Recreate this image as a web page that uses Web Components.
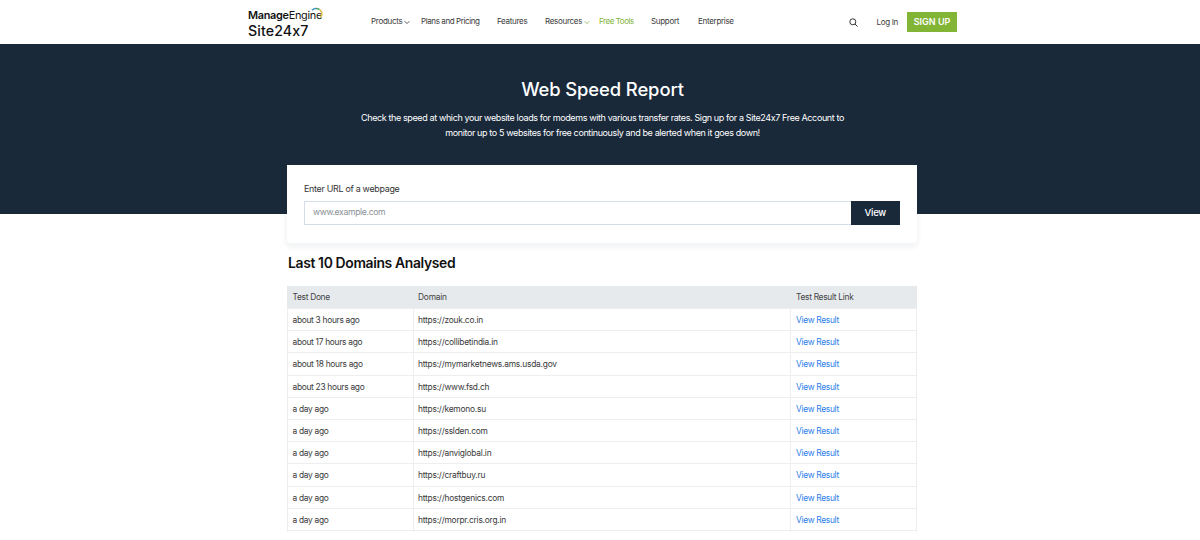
<!DOCTYPE html>
<html>
<head>
<meta charset="utf-8">
<title>Web Speed Report</title>
<style>
    html { margin: 0; padding: 0; background: #fff; overflow: hidden; }
    body { margin: 0; font-family: Inter, "Liberation Sans", sans-serif; color: #222; height: 540px; }
</style>
</head>
<body>
<site-header></site-header>
<speed-hero></speed-hero>
<url-card></url-card>
<domain-table></domain-table>

<script>
class SiteHeader extends HTMLElement {
    constructor() {
        super();
        this.attachShadow({ mode: 'open' });
        const chev = c => `<svg class="chev" width="6" height="5" viewBox="0 0 7 5"><path d="M.7 1l2.8 2.8L6.3 1" fill="none" stroke="${c}" stroke-width="1"/></svg>`;
        this.shadowRoot.innerHTML = `
        <style>
            :host { display: block; height: 44px; background: #fff; }
            .wrap { display: flex; align-items: center; height: 44px; padding-left: 248px; box-sizing: border-box; width: 957px; }
            .logo { display: flex; flex-direction: column; width: 123px; position: relative; flex: none; color: #111; padding-top: 3px; }
            .me { font: 600 10.9px/13px Inter, sans-serif; letter-spacing: -.3px; white-space: nowrap; }
            .me span { font-weight: 400; }
            .s247 { font: 500 14.2px/17px Inter, sans-serif; font-feature-settings: "calt" 0; letter-spacing: .1px; }
            .arc { position: absolute; left: 62px; top: 1px; }
            nav { display: flex; align-items: center; font: 400 8px/12px Inter, sans-serif; letter-spacing: -.3px; color: #3a3a3a; padding-bottom: 2px; }
            nav a { white-space: nowrap; }
            .chev { margin-left: 2px; vertical-align: -1px; }
            .green { color: #7fb236; }
            .right { margin-left: auto; display: flex; align-items: center; font: 400 8px/12px Inter, sans-serif; letter-spacing: -.3px; color: #3a3a3a; }
            .signup { background: #82b536; color: #fff; font: 600 9px/20px Inter, sans-serif; letter-spacing: 0; width: 50px; height: 20px; text-align: center; margin-left: 9px; }
            .search { margin-right: 18px; display: block; }
        </style>
        <div class="wrap">
            <div class="logo">
                <div class="me">Manage<span>Engine</span></div>
                <div class="s247">Site24x7</div>
                <svg class="arc" width="14" height="12" viewBox="0 0 14 12" fill="none" stroke-width="1.5">
                    <path d="M2 3.2A6 6 0 0 1 6 1.6" stroke="#3f8fc4"/>
                    <path d="M6 1.6a6 6 0 0 1 3.6 1.1" stroke="#4aa86a"/>
                    <path d="M9.6 2.7a6 6 0 0 1 2.4 3.4" stroke="#e3b53c"/>
                    <path d="M12 6.1a6 6 0 0 1-1.6 4.2" stroke="#d9c34e"/>
                </svg>
            </div>
            <nav>
                <a style="width:50px">Products${chev('#444')}</a>
                <a style="width:76px;letter-spacing:-.4px">Plans and Pricing</a>
                <a style="width:48px">Features</a>
                <a style="width:54px">Resources${chev('#8ab84a')}</a>
                <a class="green" style="width:52px;letter-spacing:-.45px">Free Tools</a>
                <a style="width:47px">Support</a>
                <a>Enterprise</a>
            </nav>
            <div class="right">
                <svg class="search" width="9" height="9" viewBox="0 0 9 9" fill="none" stroke="#333" stroke-width="1"><circle cx="3.8" cy="3.8" r="3"/><path d="M6 6l2.5 2.5"/></svg>
                <a>Log In</a>
                <a class="signup">SIGN UP</a>
            </div>
        </div>`;
    }
}

class SpeedHero extends HTMLElement {
    constructor() {
        super();
        this.attachShadow({ mode: 'open' });
        this.shadowRoot.innerHTML = `
        <style>
            :host { display: block; height: 170px; background: #19293a; color: #fff; text-align: center; box-sizing: border-box; padding: 33px 0 0 5px; }
            h1 { margin: 0; font: 500 18.4px/24px Inter, sans-serif; letter-spacing: -.1px; }
            p { margin: 9px 0 0; font: 400 9px/15px Inter, sans-serif; font-feature-settings: "calt" 0; letter-spacing: -.38px; }
        </style>
        <h1>Web Speed Report</h1>
        <p>Check the speed at which your website loads for modems with various transfer rates. Sign up for a Site24x7 Free Account to<br>monitor up to 5 websites for free continuously and be alerted when it goes down!</p>`;
    }
}

class UrlCard extends HTMLElement {
    constructor() {
        super();
        this.attachShadow({ mode: 'open' });
        this.shadowRoot.innerHTML = `
        <style>
            :host { display: block; width: 630px; height: 78px; margin: -49px 0 0 287px; background: #fff; box-sizing: border-box; padding: 17px 17px 0; position: relative; border-radius: 0 0 4px 4px; }
            :host::before { content: ""; position: absolute; inset: 0; z-index: -1; border-radius: 4px; box-shadow: 0 3px 4px 2px #f4f5f6; }
            label { display: block; font: 400 8.9px/13px Inter, sans-serif; letter-spacing: -.28px; color: #333; }
            .row { display: flex; margin-top: 5.5px; height: 24px; }
            .field { flex: 1; border: 1px solid #d5dee7; border-right: 0; box-sizing: border-box; font: 400 8.6px/21px Inter, sans-serif; letter-spacing: -.33px; color: #8a8f94; padding-left: 8px; }
            .btn { width: 49.5px; background: #19293a; color: #fff; font: 500 9.6px/24px Inter, sans-serif; letter-spacing: -.3px; text-align: center; }
        </style>
        <label>Enter URL of a webpage</label>
        <div class="row">
            <div class="field">www.example.com</div>
            <div class="btn">View</div>
        </div>`;
    }
}

class DomainTable extends HTMLElement {
    constructor() {
        super();
        this.attachShadow({ mode: 'open' });
        const rows = [
            ['about 3 hours ago', 'https://zouk.co.in'],
            ['about 17 hours ago', 'https://collibetindia.in'],
            ['about 18 hours ago', 'https://mymarketnews.ams.usda.gov'],
            ['about 23 hours ago', 'https://www.fsd.ch'],
            ['a day ago', 'https://kemono.su'],
            ['a day ago', 'https://sslden.com'],
            ['a day ago', 'https://anviglobal.in'],
            ['a day ago', 'https://craftbuy.ru'],
            ['a day ago', 'https://hostgenics.com'],
            ['a day ago', 'https://morpr.cris.org.in']
        ];
        this.shadowRoot.innerHTML = `
        <style>
            :host { display: block; width: 630px; margin: 0 0 0 287px; }
            h2 { margin: 0; padding: 11px 0 0 1px; font: 600 13.9px/19px Inter, sans-serif; letter-spacing: -.35px; color: #111; height: 32px; }
            .row { display: grid; grid-template-columns: 127px 1fr 126px; height: 22.2px; border-bottom: 1px solid #eceef0; box-sizing: border-box; font: 400 8.4px/23px Inter, sans-serif; letter-spacing: -.3px; color: #3a3a3a; }
            .row > div { padding-left: 4.5px; border-right: 1px solid #eceef0; }
            .row > div:first-child { border-left: 1px solid #eceef0; }
            .row > div:nth-child(2) { padding-left: 4px; letter-spacing: -.22px; }
            .row > div:nth-child(3) { padding-left: 5px; }
            .head { background: #e7eaed; height: 23px; line-height: 22px; color: #444; }
            .head > div, .head > div:first-child { border-color: #e7eaed; }
            a { color: #2b7de9; }
        </style>
        <h2>Last 10 Domains Analysed</h2>
        <div class="row head"><div>Test Done</div><div>Domain</div><div>Test Result Link</div></div>
        ${rows.map(r => `<div class="row"><div>${r[0]}</div><div>${r[1]}</div><div><a>View Result</a></div></div>`).join('')}`;
    }
}

customElements.define('site-header', SiteHeader);
customElements.define('speed-hero', SpeedHero);
customElements.define('url-card', UrlCard);
customElements.define('domain-table', DomainTable);
</script>
</body>
</html>
